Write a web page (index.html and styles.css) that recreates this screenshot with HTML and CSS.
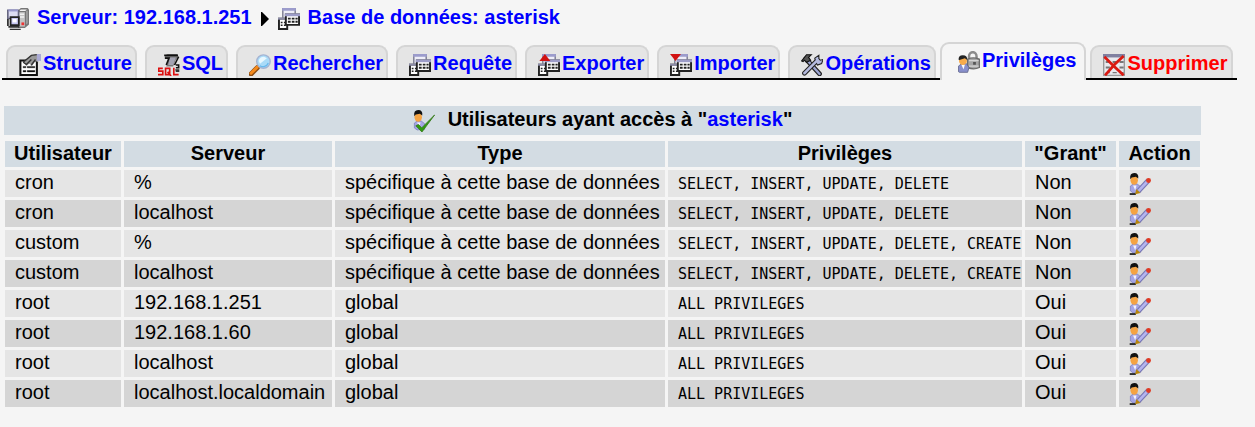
FILE: index.html
```
<!DOCTYPE html>
<html lang="fr">
<head>
<meta charset="utf-8">
<title>Privilèges - asterisk</title>
<link rel="stylesheet" href="styles.css">
</head>
<body>
<svg class="sprites" aria-hidden="true">
  <symbol id="tables" viewBox="0 0 16 16">
    <path d="M3.500 7V.5h9V4" fill="#eeeef8" stroke="#77778c"/>
    <path d="M3 0h10v2H3z" fill="#9c9ccc"/>
    <path d="M.7 7.700h6v7.600h-6z" fill="#fff" stroke="#222" stroke-width="1.400"/>
    <path d="M0 7h7v1.500H0z" fill="#8c8ca8"/>
    <path d="M2 10h1.300v1H2zm2.300 0h1.300v1H4.300zM2 12h1.300v1H2zm2.300 0h1.300v1H4.300z" fill="#222"/>
    <path d="M5.700 4.700h9.600v7.600H5.700z" fill="#fff" stroke="#222" stroke-width="1.400"/>
    <path d="M5 4h11v2H5z" fill="#9c9cc8"/>
    <path d="M7.200 7h2v1.400h-2zm2.800 0h2v1.400h-2zm2.700 0h1.600v1.400h-1.600zM7.200 9.300h2v1.400h-2zm2.800 0h2v1.400h-2zm2.700 0h1.600v1.400h-1.600z" fill="#222"/>
  </symbol>
  <symbol id="server" viewBox="0 0 16 16">
    <path d="M8 2l2-2h5l1 1v11l-3 2.500H8z" fill="#777"/>
    <path d="M8.500 3H13v10.500H8.500z" fill="#c4c4c4"/>
    <path d="M10 1h4.500l-1.200 1.200H9zM9 4h3.500v1H9zm0 2h3.500v1H9z" fill="#f2f2f2"/>
    <path d="M14 2h1v9l-1 1z" fill="#aaa"/>
    <path d="M10.500 10.500h2v2h-2z" fill="#e33"/>
    <path d="M.6 1.600h7.800v6H.6z" fill="#dcdcf2" stroke="#666680" stroke-width="1.200"/>
    <path d="M1 1h7v1.500H1z" fill="#9999cc"/>
    <path d="M2.600 6.600h6v5.800h-6z" fill="#c6c6f2" stroke="#222" stroke-width="1.300"/>
    <path d="M4 8h3v2.500H4z" fill="#fff"/>
    <path d="M0 8h1.300v5H0zm1 5h8v1.300H1zm1 2h8v1H2z" fill="#333"/>
  </symbol>
  <symbol id="structure" viewBox="0 0 16 16">
    <path d="M1 4.700h12v10.600H1z" fill="#fff" stroke="#111" stroke-width="1.500"/>
    <path d="M3 9h2v1H3zm0 3h2v1H3zm3-3h5.500v1H6zm0 3h5.500v1H6z" fill="#111" stroke="#111" stroke-width=".3"/>
    <path d="M3 6l6-5 5-1v6l-2-1-3 4-1-2-3 1z" fill="#999"/>
    <path d="M3 6l6-5 4-.5M5 8l4-4m0 4l3-4M3 6l3 2" stroke="#333" fill="none"/>
    <path d="M13 0h3v5h-3z" fill="#aaaad4"/>
  </symbol>
  <symbol id="sql" viewBox="0 0 16 16">
    <path d="M5 1l2-1h7l1 2-2 2-2 5H6l2-6H5z" fill="#777"/>
    <path d="M8.500 2.500H13l-2 5.500H7.500z" fill="#a4a4b4"/>
    <path d="M4.500 1h10M5 3h3L6 8m9-6l-3 6M13 8h2v2h-2" stroke="#111" stroke-width="1.200" fill="none"/>
    <path d="M3.500 10.500h-3v2h3v2.500H0M5.500 10.500h3V15h-3zM7 13l2.500 3M11.500 10v5H15" fill="none" stroke="#d11" stroke-width="1.200"/>
    <path d="M12.500 11h3v2h-2.500z" fill="#333"/>
  </symbol>
  <symbol id="search" viewBox="0 0 16 16">
    <path d="M1.500 14.500l4.500-4.500" stroke="#8a4d15" stroke-width="3.600" stroke-linecap="round"/>
    <path d="M1.500 14l4.500-4.500" stroke="#f58a1c" stroke-width="2.200" stroke-linecap="round"/>
    <circle cx="10.500" cy="5.500" r="4.900" fill="#a9dbf8" stroke="#a5b4d2"/>
    <path d="M7 5a4 4 0 014-3l2 1-5 4z" fill="#e8f8ff"/>
    <path d="M8 8.500c2 1.500 5 .5 6-2" stroke="#68b9ed" fill="none"/>
  </symbol>
  <symbol id="tools" viewBox="0 0 16 16">
    <path d="M3.500 3.500l10 11" stroke="#222" stroke-width="3.400" stroke-linecap="round"/>
    <path d="M5 5l8.500 9.500" stroke="#9da5d2" stroke-width="1.700" stroke-linecap="round"/>
    <path d="M.5 5L4 .5h3.500L5.500 2.500l1.500 2-3 1.500-1.500-1.500-1 1z" fill="#555" stroke="#111" stroke-width=".8"/>
    <path d="M2.500 14L12 4.500" stroke="#222" stroke-width="3.400" stroke-linecap="round"/>
    <path d="M11 6.500L10 3l3-2v2.500l1 1L16 4l-1 3-3 1z" fill="#b5bbdf" stroke="#222" stroke-width=".8"/>
    <path d="M2.500 14L12 4.500" stroke="#b5bbdf" stroke-width="1.800" stroke-linecap="round"/>
  </symbol>
  <symbol id="rights" viewBox="0 0 16 16">
    <path d="M8 7V4c0-4.200 5.500-4.200 5.500 0v3" fill="none" stroke="#8c8c8c" stroke-width="1.800"/>
    <path d="M7 6q4-2 8.500 0v6q-4 2-8.500 0z" fill="#a6a6a6" stroke="#6c6c6c"/>
    <path d="M8 7h7M8 11h7" stroke="#d4d4d4"/>
    <path d="M11 8h2v2h-2z" fill="#555"/>
    <path d="M.3 15v-4l2.700-2h3l2 3-1 3.500H1z" fill="#8990cc" stroke="#5c6188" stroke-width=".6"/>
    <path d="M2.500 10h2.500l-1 3.500z" fill="#fff"/>
    <ellipse cx="3.600" cy="7" rx="2.900" ry="3.200" fill="#f8ac4c"/>
    <path d="M.5 6.500Q0 3 3.500 3t3.200 3.500L5 5.300 1 6.500z" fill="#222"/>
  </symbol>
  <symbol id="drop" viewBox="0 0 16 16">
    <path d="M.5.5h15v15H.5z" fill="#e9e9ee" stroke="#999"/>
    <path d="M0 0h16v2.500H0z" fill="#8080a0"/>
    <path d="M2 5h3v1.500H2zm5 0h3v1.500H7zm5 0h3v1.500h-3zM2 9h3v1.500H2zm10 0h3v1.500h-3zM2 13h3v1H2zm5 0h3v1H7zm5 0h3v1h-3z" fill="#777"/>
    <path d="M1 2l6 6 8 7.500M15 1.500L8 8l-6.500 7.500" stroke="#d91a12" stroke-width="2" fill="none"/>
  </symbol>
  <symbol id="person" viewBox="0 0 16 16">
    <path d="M1 13V9.500L3 8h3l2.500 2v4L3 14.500z" fill="#a5a5e4" stroke="#777bb8" stroke-width=".5"/>
    <path d="M3 9h2.500l-1 3.500z" fill="#f4f4ff"/>
    <ellipse cx="3.800" cy="5.300" rx="2.700" ry="3.300" fill="#f5a342"/>
    <path d="M.9 4.500Q.3 0 3.800 0T6.700 4L5 2.800l-3 .4z" fill="#111"/>
  </symbol>
  <symbol id="check" viewBox="0 0 16 16">
    <use href="#person"/>
    <path d="M2 11.500l2-1 2.300 2.500L15.800 3.500 6.500 16z" fill="#2f9a10" stroke="#38791d" stroke-width=".6"/>
  </symbol>
  <symbol id="edit" viewBox="0 0 16 16">
    <use href="#person"/>
    <path d="M.5 15.300h4.500" stroke="#111" stroke-width="1.200"/>
    <path d="M7 13l7-7.500" stroke="#7777b4" stroke-width="3.600"/>
    <path d="M7 13l7-7.500" stroke="#b4b4ee" stroke-width="2"/>
    <path d="M4.500 15.500l.8-3.800 3 2.800z" fill="#b8860b"/>
    <circle cx="14.200" cy="5.500" r="1.800" fill="#e03a22"/>
  </symbol>
</svg>

<header class="location">
  <a href="#serveur"><svg class="icon"><use href="#server"/></svg>Serveur: 192.168.1.251</a>
  <svg class="arrow" viewBox="0 0 8 14" aria-hidden="true"><path d="M0 0h1l7 7-7 7H0z"/></svg>
  <a href="#base"><svg class="icon"><use href="#tables"/></svg>Base de données: asterisk</a>
</header>

<nav class="tabs">
  <a class="tab" href="#structure-tab"><svg class="icon"><use href="#structure"/></svg>Structure</a>
  <a class="tab" href="#sql-tab"><svg class="icon"><use href="#sql"/></svg>SQL</a>
  <a class="tab" href="#rechercher"><svg class="icon"><use href="#search"/></svg>Rechercher</a>
  <a class="tab" href="#requete"><svg class="icon"><use href="#tables"/></svg>Requête</a>
  <a class="tab" href="#exporter"><svg class="icon" viewBox="0 0 16 16"><use href="#tables"/><path d="M1 5l4-5 4 5z" fill="#d11111"/></svg>Exporter</a>
  <a class="tab" href="#importer"><svg class="icon" viewBox="0 0 16 16"><use href="#tables"/><path d="M0 0h8L4 5z" fill="#d11111"/></svg>Importer</a>
  <a class="tab" href="#operations"><svg class="icon"><use href="#tools"/></svg>Opérations</a>
  <a class="tab active" href="#privileges" aria-current="page"><svg class="icon"><use href="#rights"/></svg>Privilèges</a>
  <a class="tab danger" href="#supprimer"><svg class="icon"><use href="#drop"/></svg>Supprimer</a>
</nav>

<main class="users">
  <h1 class="title" id="title"><svg class="icon"><use href="#check"/></svg><span>Utilisateurs ayant accès à "<a href="#asterisk">asterisk</a>"</span></h1>
  <table class="grid" aria-labelledby="title">
    <colgroup><col class="c-user"><col class="c-host"><col class="c-type"><col class="c-priv"><col class="c-grant"><col class="c-action"></colgroup>
    <thead>
      <tr><th>Utilisateur</th><th>Serveur</th><th>Type</th><th>Privilèges</th><th>"Grant"</th><th>Action</th></tr>
    </thead>
    <tbody>
      <tr><td>cron</td><td>%</td><td>spécifique à cette base de données</td><td><code>SELECT, INSERT, UPDATE, DELETE</code></td><td>Non</td><td><a href="#e1" aria-label="Modifier"><svg class="icon"><use href="#edit"/></svg></a></td></tr>
      <tr><td>cron</td><td>localhost</td><td>spécifique à cette base de données</td><td><code>SELECT, INSERT, UPDATE, DELETE</code></td><td>Non</td><td><a href="#e2" aria-label="Modifier"><svg class="icon"><use href="#edit"/></svg></a></td></tr>
      <tr><td>custom</td><td>%</td><td>spécifique à cette base de données</td><td><code>SELECT, INSERT, UPDATE, DELETE, CREATE</code></td><td>Non</td><td><a href="#e3" aria-label="Modifier"><svg class="icon"><use href="#edit"/></svg></a></td></tr>
      <tr><td>custom</td><td>localhost</td><td>spécifique à cette base de données</td><td><code>SELECT, INSERT, UPDATE, DELETE, CREATE</code></td><td>Non</td><td><a href="#e4" aria-label="Modifier"><svg class="icon"><use href="#edit"/></svg></a></td></tr>
      <tr><td>root</td><td>192.168.1.251</td><td>global</td><td><code>ALL PRIVILEGES</code></td><td>Oui</td><td><a href="#e5" aria-label="Modifier"><svg class="icon"><use href="#edit"/></svg></a></td></tr>
      <tr><td>root</td><td>192.168.1.60</td><td>global</td><td><code>ALL PRIVILEGES</code></td><td>Oui</td><td><a href="#e6" aria-label="Modifier"><svg class="icon"><use href="#edit"/></svg></a></td></tr>
      <tr><td>root</td><td>localhost</td><td>global</td><td><code>ALL PRIVILEGES</code></td><td>Oui</td><td><a href="#e7" aria-label="Modifier"><svg class="icon"><use href="#edit"/></svg></a></td></tr>
      <tr><td>root</td><td>localhost.localdomain</td><td>global</td><td><code>ALL PRIVILEGES</code></td><td>Oui</td><td><a href="#e8" aria-label="Modifier"><svg class="icon"><use href="#edit"/></svg></a></td></tr>
    </tbody>
  </table>
</main>
</body>
</html>
```
FILE: styles.css
```
body {
  margin: 0;
  background: #f5f5f5;
  color: #000;
  font: 20px/24px "Liberation Sans", Arial, sans-serif;
  white-space: nowrap;
}

a {
  color: #00f;
  text-decoration: none;
}

.sprites {
  display: none;
}

.icon {
  width: 22px;
  height: 22px;
  flex: none;
}

.location {
  display: flex;
  align-items: center;
  gap: 9px;
  padding: 5px 7px 0;
  font-weight: bold;
}

.location a {
  display: flex;
  gap: 8px;
}

.location .icon {
  margin-top: 3px;
}

.arrow {
  width: 8px;
  height: 14px;
  margin-top: 3px;
}

.tabs {
  display: flex;
  align-items: flex-end;
  gap: 8px;
  width: max-content;
  margin: 12px 0 0 2px;
  padding: 0 4px;
  border-bottom: 2px solid #000;
  font-weight: bold;
}

.tab {
  display: flex;
  align-items: center;
  gap: 2px;
  padding: 1px 3px 0 11px;
  border: 2px solid #d5d5d5;
  border-bottom: 0;
  border-radius: 9px 9px 0 0;
  background: #e5e5e5;
  line-height: 30px;
}

.tab .icon {
  margin-top: 4px;
}

.tab.active {
  margin: 0 -4px -2px;
  padding: 1px 8px 5px 16px;
  background: #f5f5f5;
}

.tab.danger {
  color: #f00;
}

.users {
  display: inline-block;
  margin: 26px 4px 0;
}

.title {
  display: flex;
  justify-content: center;
  gap: 13px;
  margin: 0;
  padding-bottom: 3px;
  background: #d3dce3;
  font-size: 20px;
  line-height: 26px;
}

.title .icon {
  margin-top: 4px;
}

.grid {
  margin: 3px -2px 0;
  border-spacing: 3px;
}

.c-user { width: 116px; }
.c-host { width: 208px; }
.c-type { width: 330px; }
.c-priv { width: 354px; }
.c-grant { width: 91px; }
.c-action { width: 81px; }

th {
  padding: 0 0 2px;
  background: #d3dce3;
}

td {
  padding: 0 0 2px 10px;
  background: #e5e5e5;
  line-height: 25px;
}

tbody tr:nth-child(even) td {
  background: #d5d5d5;
}

td .icon {
  display: block;
  margin-top: 2px;
}

code {
  font: 15px/20px "DejaVu Sans Mono", monospace;
}
```
